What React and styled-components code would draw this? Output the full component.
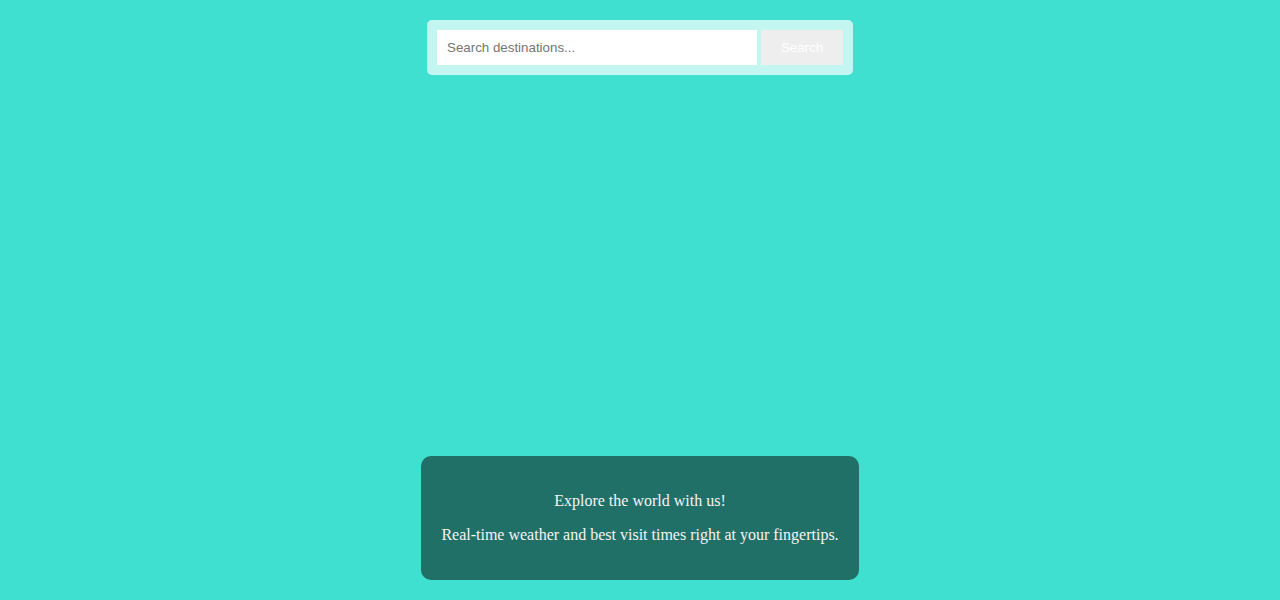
import React from "react";
import styled, { createGlobalStyle } from "styled-components";

const Global = createGlobalStyle`
  html, body { margin: 0; padding: 0; }
  body {
    background: #40e0d0;
    font-family: "Liberation Serif", "Times New Roman", serif;
  }
  * { box-sizing: border-box; }
`;

const Page = styled.div`
  min-height: 100vh;
  padding: 20px;
  display: flex;
  flex-direction: column;
  align-items: center;
  justify-content: space-between;
`;

const SearchBar = styled.form`
  display: flex;
  gap: 4px;
  padding: 10px;
  background: rgba(255, 255, 255, 0.69);
  border-radius: 5px;
`;

const SearchInput = styled.input`
  width: 320px;
  height: 35px;
  padding: 10px;
  border: none;
  outline: none;
  background: #fff;
  font-family: "Liberation Sans", Arial, sans-serif;
  font-size: 13.333px;
  color: #333;
  &::placeholder { color: #757575; }
`;

const SearchButton = styled.button`
  width: 82px;
  height: 35px;
  padding: 0;
  border: none;
  background: #eeeeee;
  color: #fff;
  font-family: "Liberation Sans", Arial, sans-serif;
  font-size: 13.333px;
  cursor: pointer;
`;

const InfoCard = styled.div`
  padding: 20px;
  background: rgba(0, 0, 0, 0.5);
  border-radius: 10px;
  color: #f4f4f4;
  text-align: center;
  font-size: 16px;
  line-height: 18px;
`;

const InfoText = styled.p`
  margin: 16px 0;
`;

export default function App() {
  return (
    <>
      <Global />
      <Page>
        <SearchBar onSubmit={(e) => e.preventDefault()}>
          <SearchInput type="text" placeholder="Search destinations..." />
          <SearchButton type="submit">Search</SearchButton>
        </SearchBar>
        <InfoCard>
          <InfoText>Explore the world with us!</InfoText>
          <InfoText>Real-time weather and best visit times right at your fingertips.</InfoText>
        </InfoCard>
      </Page>
    </>
  );
}
